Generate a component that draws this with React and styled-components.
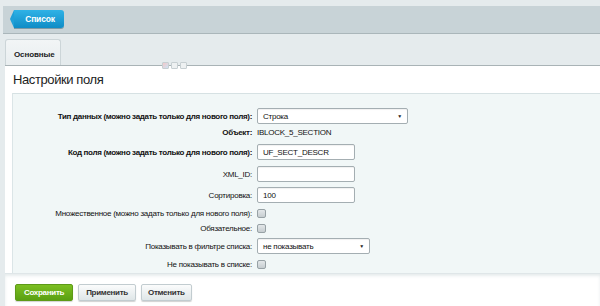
import React from "react";
import styled, { createGlobalStyle } from "styled-components";

const GlobalStyle = createGlobalStyle`
  html, body {
    margin: 0;
    padding: 0;
    background: #e5ebed;
    font-family: "Liberation Sans", Arial, sans-serif;
    color: #000;
  }
  * { box-sizing: border-box; }
`;

const Page = styled.div`
  width: 600px;
  height: 306px;
  overflow: hidden;
  padding-top: 6px;
`;

const Toolbar = styled.div`
  margin-left: 3px;
  height: 28px;
  background: #c8d3d7;
  border-bottom: 1px solid #aab6ba;
  display: flex;
  align-items: flex-start;
  padding: 4px 0 0 7px;
`;

const BackButton = styled.div`
  position: relative;
  height: 18px;
  width: 50px;
  margin-left: 4px;
  background: linear-gradient(#2fb2e6, #0f8cc6);
  border-radius: 0 3px 3px 0;
  color: #fff;
  font-weight: bold;
  font-size: 8.5px;
  letter-spacing: -0.2px;
  display: flex;
  align-items: center;
  justify-content: center;
  padding-left: 2px;
  box-shadow: 0 1px 0 #7d9aa6;
  &::before {
    content: "";
    position: absolute;
    left: -4px;
    top: 0;
    border-style: solid;
    border-width: 9px 4px 9px 0;
    border-color: transparent #20a0d8 transparent transparent;
  }
`;

const Tabs = styled.div`
  display: flex;
  padding: 5px 0 0 5px;
`;

const Tab = styled.div`
  width: 56px;
  height: 26px;
  background: linear-gradient(#f2f5f6, #e9eef0);
  border: 1px solid #ccd5d8;
  border-bottom: none;
  border-radius: 3px 3px 0 0;
  font-size: 8px;
  letter-spacing: -0.1px;
  font-weight: bold;
  color: #222;
  padding: 10px 0 0 8px;
`;

const Panel = styled.div`
  position: relative;
  margin-left: 5px;
  background: #fff;
  border-top: 1px solid #a9b3b6;
`;

const Pins = styled.div`
  position: absolute;
  left: 157px;
  top: -4px;
  display: flex;
  gap: 2px;
`;

const Pin = styled.span`
  width: 7px;
  height: 7px;
  border: 1px solid #c7cfd2;
  border-radius: 1px;
  background: ${(p) => (p.$color ? "linear-gradient(135deg,#f4c9c9,#cde3f4)" : "#eef1f2")};
`;

const Title = styled.div`
  font-size: 13px;
  letter-spacing: -0.4px;
  color: #222;
  padding: 6px 0 0 8px;
  height: 27px;
`;

const Form = styled.div`
  margin-left: 7px;
  background: #f1f7f7;
  border-top: 1px solid #d6e1e3;
  border-left: 1px solid #dbe5e7;
  padding-top: 14px;
  height: 180px;
`;

const Row = styled.div`
  display: grid;
  grid-template-columns: 239px 1fr;
  column-gap: 5px;
  align-items: center;
  height: ${(p) => p.$h}px;
  font-size: 8px;
  letter-spacing: -0.25px;
`;

const Label = styled.div`
  text-align: right;
  color: #111;
  font-weight: ${(p) => (p.$bold ? "bold" : "normal")};
  letter-spacing: ${(p) => (p.$bold ? "-0.32px" : "-0.25px")};
  white-space: nowrap;
`;

const Value = styled.div`
  display: flex;
  align-items: center;
  color: #111;
`;

const Input = styled.div`
  width: ${(p) => p.$w}px;
  height: 16px;
  background: #fff;
  border: 1px solid #a4aeb2;
  border-radius: 2px;
  display: flex;
  align-items: center;
  justify-content: space-between;
  padding: 0 5px;
  color: #111;
  box-shadow: inset 0 1px 1px rgba(0, 0, 0, 0.06);
`;

const Arrow = styled.span`
  font-size: 5px;
  color: #222;
`;

const Checkbox = styled.span`
  width: 9px;
  height: 9px;
  border: 1px solid #97a1a5;
  border-radius: 2px;
  background: linear-gradient(#e3e7e9, #c6cdd0);
`;

const Footer = styled.div`
  height: 40px;
  border-top: 1px solid #dfe6e8;
  box-shadow: inset 0 2px 3px rgba(160, 180, 185, 0.25);
  display: flex;
  gap: 5px;
  padding: 10px 0 0 10px;
`;

const Button = styled.div`
  height: 17px;
  padding: 0 ${(p) => p.$px}px;
  border-radius: 2px;
  font-size: 8px;
  letter-spacing: -0.3px;
  font-weight: bold;
  display: flex;
  align-items: center;
  color: ${(p) => (p.$primary ? "#fff" : "#333")};
  background: ${(p) =>
    p.$primary
      ? "linear-gradient(#7cbf22, #5aa012)"
      : "linear-gradient(#fbfcfc, #dfe6e8)"};
  border: 1px solid ${(p) => (p.$primary ? "#5e9a18" : "#c2ccd0")};
  box-shadow: 0 1px 1px rgba(0, 0, 0, 0.18);
`;

const rows = [
  { h: 16, label: "Тип данных (можно задать только для нового поля):", bold: true, kind: "select", w: 151, text: "Строка" },
  { h: 16, label: "Объект:", bold: true, kind: "text", text: "IBLOCK_5_SECTION" },
  { h: 24, label: "Код поля (можно задать только для нового поля):", bold: true, kind: "input", w: 98, text: "UF_SECT_DESCR" },
  { h: 20, label: "XML_ID:", kind: "input", w: 98, text: "" },
  { h: 22, label: "Сортировка:", kind: "input", w: 98, text: "100" },
  { h: 14, label: "Множественное (можно задать только для нового поля):", kind: "check" },
  { h: 16, label: "Обязательное:", kind: "check" },
  { h: 20, label: "Показывать в фильтре списка:", kind: "select", w: 113, text: "не показывать" },
  { h: 16, label: "Не показывать в списке:", kind: "check" },
];

const renderValue = (r) => {
  if (r.kind === "text") return r.text;
  if (r.kind === "check") return <Checkbox />;
  return (
    <Input $w={r.w}>
      <span>{r.text}</span>
      {r.kind === "select" && <Arrow>▼</Arrow>}
    </Input>
  );
};

export default function App() {
  return (
    <>
      <GlobalStyle />
      <Page>
        <Toolbar>
          <BackButton>Список</BackButton>
        </Toolbar>
        <Tabs>
          <Tab>Основные</Tab>
        </Tabs>
        <Panel>
          <Pins>
            <Pin $color />
            <Pin />
            <Pin />
          </Pins>
          <Title>Настройки поля</Title>
          <Form>
            {rows.map((r) => (
              <Row key={r.label} $h={r.h}>
                <Label $bold={r.bold}>{r.label}</Label>
                <Value>{renderValue(r)}</Value>
              </Row>
            ))}
          </Form>
          <Footer>
            <Button $primary $px={8}>Сохранить</Button>
            <Button $px={7}>Применить</Button>
            <Button $px={6}>Отменить</Button>
          </Footer>
        </Panel>
      </Page>
    </>
  );
}
